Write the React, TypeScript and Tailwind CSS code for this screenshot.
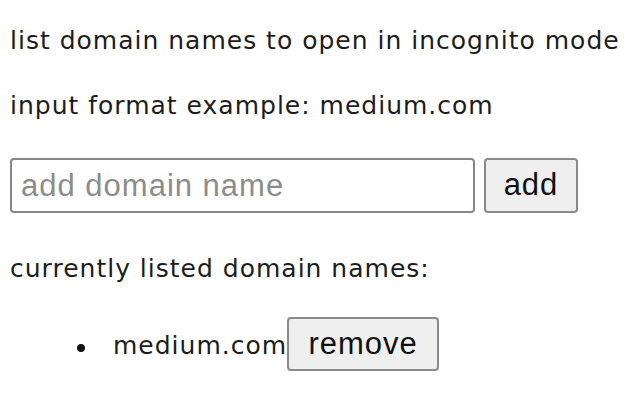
import React from "react";

export default function App() {
  const body = "text-[25px] leading-[32px] tracking-[1px]";
  return (
    <div className="min-h-screen w-[640px] h-[400px] overflow-hidden bg-white pl-[10px] pt-[25px] text-[#1c1c1c] font-['DejaVu_Sans',sans-serif]">
      <p className={body}>list domain names to open in incognito mode</p>
      <p className={`mt-[33px] ${body}`}>input format example: medium.com</p>
      <div className="mt-[36px] flex gap-[9px] font-['Liberation_Sans',Arial,sans-serif] text-[31px] tracking-[1px]">
        <input
          type="text"
          placeholder="add domain name"
          className="box-border h-[55px] w-[465px] rounded-[4px] border-2 border-[#878787] bg-white pl-[9px] text-[#111] outline-none placeholder:text-[#8c8c8c]"
        />
        <button className="h-[55px] w-[94px] rounded-[4px] border-2 border-[#8a8a8a] bg-[#efefef] text-[#111]">
          add
        </button>
      </div>
      <p className={`mt-[40px] ${body}`}>currently listed domain names:</p>
      <ul className="mt-[32px] list-none">
        <li className="flex items-baseline">
          <span className={body}>
            <span className="ml-[67px] mr-[28px] inline-block h-[8px] w-[8px] rounded-full bg-[#111] align-[2px]" />
            medium.com
          </span>
          <button className="h-[54px] w-[152px] rounded-[4px] border-2 border-[#8a8a8a] bg-[#efefef] font-['Liberation_Sans',Arial,sans-serif] text-[31px] tracking-[1px] text-[#111]">
            remove
          </button>
        </li>
      </ul>
    </div>
  );
}
